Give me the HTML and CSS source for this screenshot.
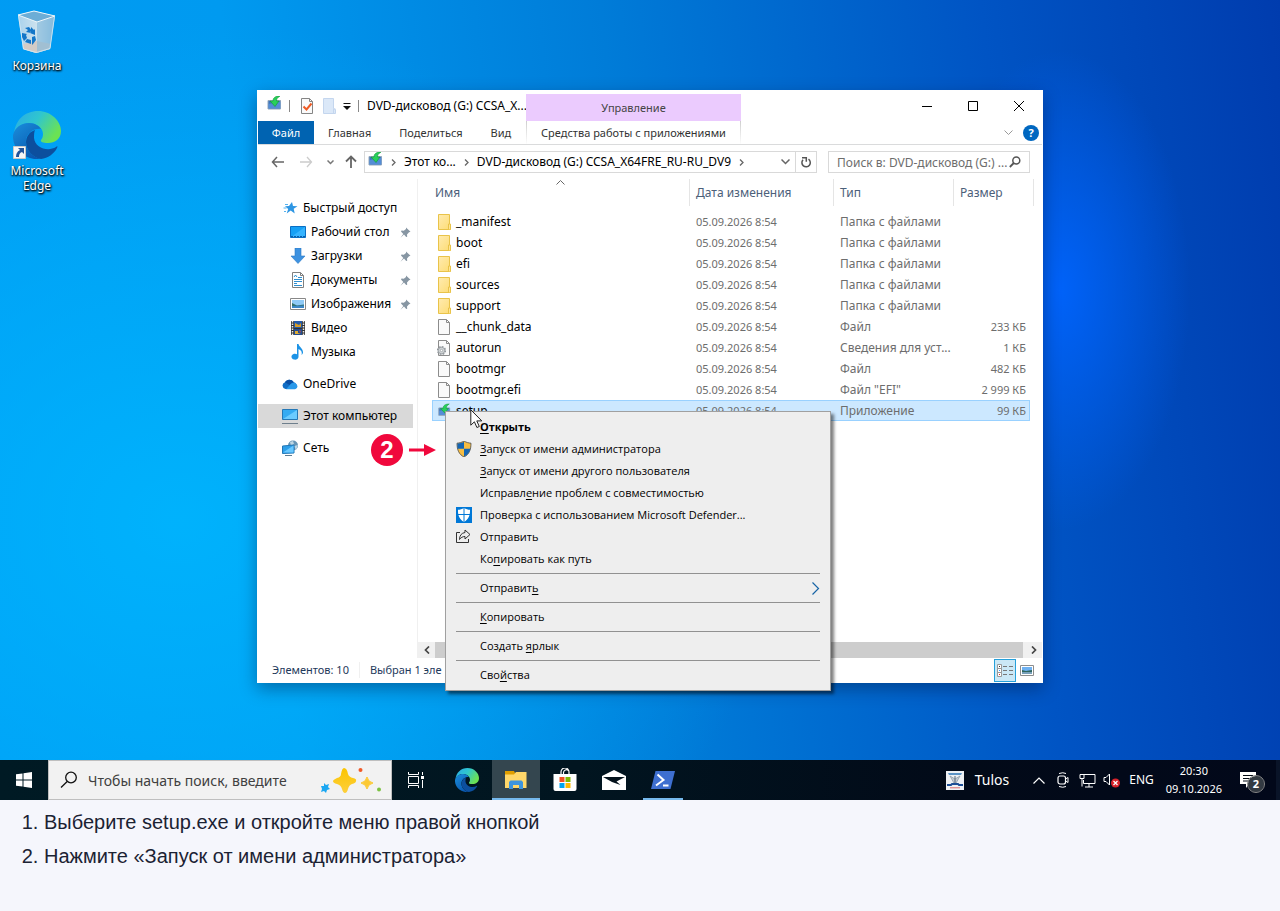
FILE: index.html
```html
<!DOCTYPE html>
<html lang="ru">
<head>
<meta charset="utf-8">
<meta name="viewport" content="width=device-width, initial-scale=1">
<title>Запуск от имени администратора</title>
<link rel="stylesheet" href="styles.css">
</head>
<body>
<svg class="defs" aria-hidden="true">
  <defs>
    <linearGradient id="edgeTop" x1="0" y1="0" x2="1" y2="0.5"><stop offset="0" stop-color="#2aa9e8"/><stop offset=".5" stop-color="#2fc6cf"/><stop offset="1" stop-color="#6be254"/></linearGradient>
    <linearGradient id="edgeMid" x1="0" y1="0" x2="0.6" y2="1"><stop offset="0" stop-color="#1a8fdc"/><stop offset="1" stop-color="#0a58b0"/></linearGradient>
    <linearGradient id="folderFill" x1="0" y1="0" x2="1" y2="1"><stop offset="0" stop-color="#ffebb0"/><stop offset="1" stop-color="#fddc74"/></linearGradient>
    <linearGradient id="binFill" x1="0" y1="0" x2="1" y2="0"><stop offset="0" stop-color="#a9d2ec"/><stop offset=".55" stop-color="#cfe3ee"/><stop offset="1" stop-color="#8cbfe0"/></linearGradient>
    <linearGradient id="starFill" x1="0" y1="0" x2="0" y2="1"><stop offset="0" stop-color="#fbc400"/><stop offset="1" stop-color="#fdcf3b"/></linearGradient>
    <symbol id="edge" viewBox="0 0 48 48">
      <path d="M1 23C2 9 12 0 25 0c13 0 23 10 23 20 0 8-6 12-13 12-5 0-8-1-7-3 1-1 2-3 2-6 0-6-6-11-14-11C8 12 2 17 1 23z" fill="url(#edgeTop)"/>
      <path d="M0 24C2 16 9 12 16 12c6 0 10 3 12 6-7-1-14 4-15 11-1 8 5 17 15 19C12 50-1 38 0 24z" fill="url(#edgeMid)"/>
      <path d="M22 19c-6 2-9 7-9 12 0 8 7 16 15 17 7-1 13-5 16-11 1-2 0-2-1-1-8 5-21 1-22-9 0-3 0-6 1-8z" fill="#0c4f9e"/>
    </symbol>
    <symbol id="folder" viewBox="0 0 14 16"><path d="M1.500.5h11v10l1 1v4h-12z" fill="url(#folderFill)" stroke="#e9c349"/><path d="M11.500 15V10h2v5.500" fill="#ffe596" stroke="#e9c349"/></symbol>
    <symbol id="file" viewBox="0 0 14 16"><path d="M1.500.5h8l3 3v12h-11z" fill="#fafafa" stroke="#8c8c8c"/><path d="M9.500.5v3h3" fill="none" stroke="#8c8c8c"/></symbol>
    <symbol id="setup" viewBox="0 0 16 16"><path d="M2 4.500h12.500v8.500H2z" fill="#3f76bd" stroke="#94a7bb"/><path d="M2.500 8l12-2.500v7h-12z" fill="#5c95df" opacity=".75"/><path d="M14 0C9 0 7 2 7 5H4l5 5.500L13 5h-2.500c0-2 1-3.500 3.500-5z" fill="#28d05a" stroke="#109738" stroke-width=".6"/></symbol>
    <symbol id="pin" viewBox="0 0 11 11"><path d="M6 .5l4.500 4.300-1.500.5-2 2.200.2 2.200-1 .3L4 7.500.5 10.700 3.300 7 1 4.600l.5-1 2.300.1L6 2z" fill="#8796a3"/></symbol>
  </defs>
</svg>

<main class="desktop">
  <div class="shortcuts">
    <a class="shortcut" href="#bin">
      <svg class="shortcut-icon bin" viewBox="0 0 40 44"><path d="M1 5L17 1l21 5-5 33-14 4-13-4z" fill="url(#binFill)"/><path d="M6 34l14-3 14 3-1 5-14 4-13-4z" fill="#d2cbc6"/><path d="M20 12v31l13-4 5-33z" fill="#80b8db" opacity=".6"/><path d="M1 5L17 1l21 5-18 6z" fill="#6cadd6" stroke="#eef7fb"/><path d="M1.500 6l5 33 13 3.500 13.500-4 4.500-32" fill="none" stroke="#d8ebf5" stroke-width=".8"/><path d="M8 18l4-1 3 4-2 1 1 1-5-1 2-2zM14 17l3 3 1-1v6l-5-2 1-1zM5 23l5 1-1 1 1 3-3 3-2-4zM10 29l4 1v4l-6-2zM15 27l3-1 1 4-3 4-1 1v-6z" fill="#1376c8"/></svg>
      <span>Корзина</span>
    </a>
    <a class="shortcut" href="#edge-app">
      <span class="edge-wrap"><svg class="shortcut-icon edge-large"><use href="#edge"/></svg>
      <svg class="link-badge" viewBox="0 0 13 13"><path d="M.5.5h12v12H.5z" fill="#f7f7f7" stroke="#c9c9c9"/><path d="M5 2h6v6L9 6C6.500 7 6 8.500 6 11H3C3 8 4 5.500 7 4z" fill="#24549a"/></svg></span>
      <span>Microsoft Edge</span>
    </a>
  </div>

  <section class="window" aria-label="Проводник">
    <header class="titlebar">
      <div class="quick-tools">
        <svg class="i16 lift"><use href="#setup"/></svg>
        <i class="rule"></i>
        <button aria-label="Свойства"><svg class="i16" viewBox="0 0 16 16"><path d="M2.500.5h8l3 3v12h-11z" fill="#fafafa" stroke="#858585"/><path d="M10.500.5v3h3" fill="none" stroke="#858585"/><path d="M4.500 8.500l3 3 5-6" fill="none" stroke="#ef5b24" stroke-width="2"/></svg></button>
        <button aria-label="Новая папка"><svg class="i16" viewBox="0 0 16 16"><path d="M2.500.5h10v10l2 1v4h-12z" fill="#dbe8f8" stroke="#c4d6ee"/><path d="M12.500 15v-4h2" fill="none" stroke="#c4d6ee"/></svg></button>
        <button aria-label="Настройка панели"><svg class="caret" viewBox="0 0 8 8"><path d="M.5 1.500h7" stroke="#111"/><path d="M0 4h8L4 8z" fill="#111"/></svg></button>
        <i class="rule"></i>
      </div>
      <h1>DVD-дисковод (G:) CCSA_X...</h1>
      <div class="manage">Управление</div>
      <div class="caption-buttons">
        <button aria-label="Свернуть"><svg viewBox="0 0 10 10"><path d="M0 5.500h10" stroke="#000"/></svg></button>
        <button aria-label="Развернуть"><svg viewBox="0 0 10 10"><path d="M.5.5h9v9h-9z" fill="none" stroke="#000"/></svg></button>
        <button aria-label="Закрыть"><svg viewBox="0 0 10 10"><path d="M0 0l10 10M10 0L0 10" stroke="#000"/></svg></button>
      </div>
    </header>
    <nav class="ribbon">
      <button class="file-tab">Файл</button>
      <button>Главная</button>
      <button>Поделиться</button>
      <button>Вид</button>
      <button class="tools-tab">Средства работы с приложениями</button>
      <span class="ribbon-end">
        <svg class="chev" viewBox="0 0 9 6"><path d="M.5.5l4 4 4-4" fill="none" stroke="#999"/></svg>
        <button class="help" aria-label="Справка">?</button>
      </span>
    </nav>
    <div class="address-row">
      <div class="history">
        <button aria-label="Назад"><svg class="arrow" viewBox="0 0 14 12"><path d="M13 6H1.500M6 1L1.500 6 6 11" fill="none" stroke="#666" stroke-width="1.500"/></svg></button>
        <button aria-label="Вперёд"><svg class="arrow" viewBox="0 0 14 12"><path d="M1 6h11M8 1l4.500 5L8 11" fill="none" stroke="#ccc" stroke-width="1.300"/></svg></button>
        <button aria-label="Журнал"><svg class="tiny" viewBox="0 0 7 5"><path d="M.5.5l3 3 3-3" fill="none" stroke="#777" stroke-width="1.500"/></svg></button>
        <button aria-label="Вверх"><svg class="arrow-up" viewBox="0 0 12 14"><path d="M6 13V1.500M1 6.500l5-5 5 5" fill="none" stroke="#666" stroke-width="1.800"/></svg></button>
      </div>
      <div class="address">
        <svg class="i16 lift"><use href="#setup"/></svg>
        <svg class="crumb" viewBox="0 0 5 7"><path d="M1 .5l3 3-3 3" fill="none" stroke="#666" stroke-width="1.300"/></svg>
        <a href="#pc">Этот ко...</a>
        <svg class="crumb" viewBox="0 0 5 7"><path d="M1 .5l3 3-3 3" fill="none" stroke="#666" stroke-width="1.300"/></svg>
        <a href="#dvd">DVD-дисковод (G:) CCSA_X64FRE_RU-RU_DV9</a>
        <svg class="crumb" viewBox="0 0 5 7"><path d="M1 .5l3 3-3 3" fill="none" stroke="#666" stroke-width="1.300"/></svg>
        <button class="drop" aria-label="Предыдущие расположения"><svg class="chev" viewBox="0 0 9 6"><path d="M.5.5l4 4 4-4" fill="none" stroke="#666" stroke-width="1.500"/></svg></button>
        <button class="reload" aria-label="Обновить"><svg viewBox="0 0 12 12"><path d="M8.500 3.200A4.200 4.200 0 1 1 3 3.800" fill="none" stroke="#555" stroke-width="1.500"/><path d="M2 1.700h4.300v4" fill="none" stroke="#555" stroke-width="1.500"/></svg></button>
      </div>
      <label class="find">
        <input type="text" aria-label="Поиск" placeholder="Поиск в: DVD-дисковод (G:) ...">
        <svg viewBox="0 0 12 12"><circle cx="7.300" cy="4.500" r="3.500" fill="none" stroke="#555" stroke-width="1.500"/><path d="M4.800 7L.8 11" stroke="#555" stroke-width="1.800"/></svg>
      </label>
    </div>

    <div class="content">
      <nav class="tree">
        <ul>
          <li><a href="#q"><svg class="i16" viewBox="0 0 16 16"><path d="M10 2l1 4 4.500.3-3.800 2.500 1 4.700-4-3-4 3 1.500-4.500L3 6.300l4-.3z" fill="#2e96e3"/><path d="M3 4.500h3M1.500 8h3M2 11.500h2" stroke="#55b2ef"/></svg>Быстрый доступ</a></li>
          <li class="child"><a href="#d"><svg class="i16" viewBox="0 0 16 16"><path d="M.5 2.500h15v11H.5z" fill="#16a0f5" stroke="#0a6fc4"/><path d="M1 13L15 3v10z" fill="#36b4ff"/><path d="M1 12.500h14" stroke="#0a5da8" stroke-dasharray="2 1"/></svg>Рабочий стол</a><svg class="pin"><use href="#pin"/></svg></li>
          <li class="child"><a href="#z"><svg class="i16" viewBox="0 0 16 16"><path d="M5 0h6v8h4l-7 7.500L1 8h4z" fill="#3e92e0" stroke="#2a79c6" stroke-width=".6"/></svg>Загрузки</a><svg class="pin"><use href="#pin"/></svg></li>
          <li class="child"><a href="#doc"><svg class="i16" viewBox="0 0 16 16"><path d="M2.500.5h8l3 3v12h-11z" fill="#fff" stroke="#808080"/><path d="M10.500.5v3h3" fill="none" stroke="#808080"/><path d="M4 5l1.500-2L7 5M8 5.500h4M4 7.500h8M4 11.500h3M4 13.500h8M4 9.500h8" stroke="#2f8fd0" fill="none"/></svg>Документы</a><svg class="pin"><use href="#pin"/></svg></li>
          <li class="child"><a href="#img"><svg class="i16" viewBox="0 0 16 16"><path d="M.5 2.500h15v11H.5z" fill="#fff" stroke="#888"/><path d="M2 4h12v8H2z" fill="#8fcaf6"/><path d="M2 7l5 2.500 7-1V12H2z" fill="#31706b"/><path d="M2 10l12-.5V12H2z" fill="#3a86c6"/></svg>Изображения</a><svg class="pin"><use href="#pin"/></svg></li>
          <li class="child"><a href="#vid"><svg class="i16" viewBox="0 0 16 16"><path d="M1 1h14v14H1z" fill="#333"/><path d="M2.500 1v14M13.500 1v14" stroke="#eee" stroke-width="1.500" stroke-dasharray="1.500 1"/><path d="M4 1h8v7H4z" fill="#255ba8"/><path d="M5 3l4 2 2-2v4H5z" fill="#d79c28"/><path d="M4 9h8v6H4z" fill="#234d91"/><path d="M5 11h3v2l3 1H5z" fill="#e0ab31"/><path d="M9 10l2 1-1 2z" fill="#c44d4b"/></svg>Видео</a></li>
          <li class="child"><a href="#mus"><svg class="i16" viewBox="0 0 16 16"><path d="M7 0h1.500c.5 3 5 4.500 4.500 9-.5 1-1 1.500-1.500 2 1-4-1-5-3-6v7.500A3.500 3 0 1 1 7 10.200z" fill="#1c93e6"/></svg>Музыка</a></li>
        </ul>
        <ul><li><a href="#od"><svg class="i16" viewBox="0 0 16 16"><path d="M3.500 13A3.500 3.500 0 0 1 3 6.200 5 5 0 0 1 11.500 6 4 4 0 0 1 13 13z" fill="#0f6cc4"/><path d="M3 6.200A5 5 0 0 1 11.500 6L7.500 9z" fill="#0a4fa5"/><path d="M4 13.200l5-5.500a4 4 0 0 1 6.500 2.500A3 3 0 0 1 13 13.200z" fill="#2999ea"/></svg>OneDrive</a></li></ul>
        <ul><li class="current"><a href="#pc"><svg class="i16" viewBox="0 0 16 16"><path d="M.5 1.500h15v10H.5z" fill="#35abf2" stroke="#2578b6"/><path d="M1 11L15 2v9z" fill="#6bcbff"/><path d="M0 15.500h16" stroke="#6e7f8c"/></svg>Этот компьютер</a></li></ul>
        <ul><li><a href="#net"><svg class="i16" viewBox="0 0 16 16"><circle cx="11" cy="5.500" r="5" fill="#6795b5"/><path d="M8 2l3-1 1 3-3 2zM12 6l4-1-2 5z" fill="#bfd6e3"/><path d="M.5 6l11.500-1v8l-11.500.5z" fill="#2d9fe9" stroke="#2277b6"/><path d="M1 12.500l10.500-7v7z" fill="#6ac8ff"/><path d="M3 15.500h7" stroke="#5d7b91"/></svg>Сеть</a></li></ul>
      </nav>

      <div class="listing">
        <table class="files">
          <colgroup><col class="c-name"><col class="c-date"><col class="c-type"><col class="c-size"></colgroup>
          <thead><tr><th>Имя<svg class="sort" viewBox="0 0 9 5"><path d="M.5 4.500l4-4 4 4" fill="none" stroke="#666"/></svg></th><th>Дата изменения</th><th>Тип</th><th>Размер</th></tr></thead>
          <tbody>
            <tr><td><svg><use href="#folder"/></svg>_manifest</td><td>05.09.2026 8:54</td><td>Папка с файлами</td><td></td></tr>
            <tr><td><svg><use href="#folder"/></svg>boot</td><td>05.09.2026 8:54</td><td>Папка с файлами</td><td></td></tr>
            <tr><td><svg><use href="#folder"/></svg>efi</td><td>05.09.2026 8:54</td><td>Папка с файлами</td><td></td></tr>
            <tr><td><svg><use href="#folder"/></svg>sources</td><td>05.09.2026 8:54</td><td>Папка с файлами</td><td></td></tr>
            <tr><td><svg><use href="#folder"/></svg>support</td><td>05.09.2026 8:54</td><td>Папка с файлами</td><td></td></tr>
            <tr><td><svg><use href="#file"/></svg>__chunk_data</td><td>05.09.2026 8:54</td><td>Файл</td><td>233 КБ</td></tr>
            <tr><td><svg viewBox="0 0 14 16"><path d="M1.500.5h8l3 3v12h-11z" fill="#fafafa" stroke="#8c8c8c"/><path d="M9.500.5v3h3" fill="none" stroke="#8c8c8c"/><circle cx="4.500" cy="10.500" r="3.600" fill="#ddd" stroke="#8d9398" stroke-width="2" stroke-dasharray="1.600 1.200"/><circle cx="4.500" cy="10.500" r="3.200" fill="#d5d8da" stroke="#8d9398" stroke-width=".7"/><circle cx="4.500" cy="10.500" r="1.200" fill="#fff" stroke="#8d9398" stroke-width=".7"/></svg>autorun</td><td>05.09.2026 8:54</td><td>Сведения для уст...</td><td>1 КБ</td></tr>
            <tr><td><svg><use href="#file"/></svg>bootmgr</td><td>05.09.2026 8:54</td><td>Файл</td><td>482 КБ</td></tr>
            <tr><td><svg><use href="#file"/></svg>bootmgr.efi</td><td>05.09.2026 8:54</td><td>Файл "EFI"</td><td>2 999 КБ</td></tr>
            <tr class="selected"><td><svg><use href="#setup"/></svg>setup</td><td>05.09.2026 8:54</td><td>Приложение</td><td>99 КБ</td></tr>
          </tbody>
        </table>
        <div class="scrollbar">
          <button aria-label="Влево"><svg viewBox="0 0 6 8"><path d="M5 .5L1.500 4 5 7.500" fill="none" stroke="#444" stroke-width="1.700"/></svg></button>
          <i class="thumb"></i>
          <button aria-label="Вправо"><svg viewBox="0 0 6 8"><path d="M1 .5L4.500 4 1 7.500" fill="none" stroke="#444" stroke-width="1.700"/></svg></button>
        </div>
      </div>
    </div>

    <footer class="status">
      <span>Элементов: 10</span><span>Выбран 1 эле</span>
      <div class="views">
        <button class="on" aria-label="Таблица"><svg viewBox="0 0 16 13"><path d="M.5.5h4v4h-4zM.5 4.500h4v4h-4zM.5 8.500h4v4h-4z" fill="#fff" stroke="#999"/><path d="M6 2.500h4m2 0h4M6 6.500h4m2 0h4M6 10.500h4m2 0h4" stroke="#777"/><path d="M2 2h1v1H2z" fill="#333"/><path d="M2 6h1v1H2z" fill="#39f"/><path d="M2 10h1v1H2z" fill="#e22"/></svg></button>
        <button aria-label="Крупные значки"><svg class="large-view" viewBox="0 0 14 11"><path d="M.5.5h13v10H.5z" fill="#fff" stroke="#8d8d8d"/><path d="M2 2h10v7H2z" fill="#6eb1f2"/><path d="M2 5l4 1 6-1v2H2z" fill="#2f665f"/><path d="M2 7h10v2H2z" fill="#78a0b9"/></svg></button>
      </div>
    </footer>
  </section>

  <menu class="context">
    <li><button class="main-action"><u>О</u>ткрыть</button></li>
    <li><button><svg class="i16" viewBox="0 0 16 16"><path d="M8 0c2.500 1.500 4.500 2 7 2.200C15 9 13 13.500 8 16 3 13.500 1 9 1 2.200 3.500 2 5.500 1.500 8 0z" fill="#f7bd42" stroke="#4a4a4a" stroke-width=".8"/><path d="M8 .8v7H1.600C1.300 6 1.300 4 1.400 2.600 4 2.400 6 1.800 8 .8z" fill="#1565b4"/><path d="M8 7.800h6.400C13.600 11.500 11.500 14 8 15.500z" fill="#1565b4"/></svg><span><u>З</u>апуск от имени администратора</span></button></li>
    <li><button><span><u>З</u>апуск от имени другого пользователя</span></button></li>
    <li><button><span>Исправл<u>е</u>ние проблем с совместимостью</span></button></li>
    <li><button><svg class="i16" viewBox="0 0 16 16"><path d="M0 0h16v16H0z" fill="#0078d7"/><path d="M8 1c2 1.300 4 1.700 6 1.800.2 6-1.500 9.500-6 12.200-4.500-2.700-6.200-6.200-6-12.200C4 2.700 6 2.300 8 1z" fill="#fff"/><path d="M8 1v14M2 7.500h12" stroke="#0078d7"/></svg><span>Проверка с использованием Microsoft Defender...</span></button></li>
    <li><button><svg class="i16 share" viewBox="0 0 16 16"><path d="M4 3.500H.5v10h12V10" fill="none" stroke="#333"/><path d="M9 3.500V1l5 4.500L9 10V7.500C6.500 7.500 5 8.500 3.500 10.500 3.500 6.500 5.500 4 9 3.500z" fill="none" stroke="#333"/></svg><span>Отправить</span></button></li>
    <li><button><span>Ко<u>п</u>ировать как путь</span></button></li>
    <li class="sep"></li>
    <li><button><span>Отправит<u>ь</u></span><svg class="submenu" viewBox="0 0 8 13"><path d="M.5.5l6 6-6 6" fill="none" stroke="#1764a5" stroke-width="1.200"/></svg></button></li>
    <li class="sep"></li>
    <li><button><span><u>К</u>опировать</span></button></li>
    <li class="sep"></li>
    <li><button><span>Создать <u>я</u>рлык</span></button></li>
    <li class="sep"></li>
    <li><button><span>Сво<u>й</u>ства</span></button></li>
  </menu>

  <svg class="cursor" viewBox="0 0 13 20"><path d="M.8.800v15.400l3.600-3.400 2.500 5.700 2.400-1-2.500-5.600h5z" fill="#fff" stroke="#222"/></svg>
  <div class="callout"><b>2</b><svg viewBox="0 0 28 12"><path d="M0 4.500h15V0l12 6-12 6V7.500H0z" fill="#f0083c"/></svg></div>
</main>

<footer class="taskbar">
  <button class="start" aria-label="Пуск"><svg viewBox="0 0 16 16"><path d="M0 2.300l6.500-.9v6.100H0zM7.500 1.200L16 0v7.500H7.500zM0 8.500h6.500v6.100L0 13.700zM7.500 8.500H16V16l-8.500-1.200z" fill="#fff"/></svg></button>
  <label class="task-search">
    <svg class="lens" viewBox="0 0 18 18"><circle cx="11" cy="6.500" r="5.300" fill="none" stroke="#111" stroke-width="1.300"/><path d="M7.200 10.500L1 16.500" stroke="#111" stroke-width="1.300"/></svg>
    <input type="text" aria-label="Поиск Windows" placeholder="Чтобы начать поиск, введите">
    <svg class="sparkles" viewBox="0 0 62 26"><path d="M24 1q3 0 4 6 1 3 5 4 4 1 3 3 0 2-4 3-3 1-4 5-1 4-3 4t-3-4q-1-4-5-5-4-1-4-3 0-1 4-3 4-1 4-4 1-6 3-6z" fill="url(#starFill)"/><path d="M47 10q1 5 6 6-5 1-6 6-1-5-6-6 5-1 6-6z" fill="#fcc934" stroke="#fcc934"/><path d="M4 16l2 2 3-1-1 3 2 2-3 1-1 3-2-2-3 1 1-3-1-3 3 0z" fill="#1ba7f2"/><circle cx="40.500" cy="3" r="2" fill="#f05a28"/><circle cx="59" cy="22.500" r="2" fill="#7cc242"/></svg>
  </label>
  <div class="apps">
    <button aria-label="Представление задач"><svg class="taskview" viewBox="0 0 16 16"><path d="M.5 0v2.500h10V0M.5 16v-2.500h10V16M.5 4.500h10v7H.5zM14.500 0v3m0 5v8" fill="none" stroke="#fff"/><path d="M13 4h3v3h-3z" fill="#fff"/></svg></button>
    <button aria-label="Edge"><svg class="i24"><use href="#edge"/></svg></button>
    <button class="active" aria-label="Проводник"><svg class="explorer" viewBox="0 0 22 18"><path d="M0 0h9l1 2v3H0z" fill="#e09e00"/><path d="M0 3.500h9L11 1h10.500v16H0z" fill="#ffd76a"/><path d="M4 18v-7l1.500-1.500h11L18 11v7h-4v-4H8v4z" fill="#3d94dd"/></svg></button>
    <button aria-label="Магазин"><svg class="store" viewBox="0 0 24 24"><path d="M8 6V4a4 4 0 0 1 8 0v2M10.500 6V4.500a3 3 0 0 1 5-2" fill="none" stroke="#fff" stroke-width="1.200"/><path d="M.5 6h23v15q0 2-2 2h-19q-2 0-2-2z" fill="#fff"/><path d="M6.500 9h5v5h-5z" fill="#f25022"/><path d="M12.500 9h5v5h-5z" fill="#7fba00"/><path d="M6.500 15h5v5h-5z" fill="#00a4ef"/><path d="M12.500 15h5v5h-5z" fill="#ffb900"/></svg></button>
    <button aria-label="Почта"><svg class="mail" viewBox="0 0 24 20"><path d="M0 6L12 0l12 6v14H0z" fill="#fff"/><path d="M1 7h22L14.500 11.500l4 3.500L10 12z" fill="#04121c"/></svg></button>
    <button class="running" aria-label="PowerShell"><svg class="shell" viewBox="0 0 24 18"><path d="M4.500 0H24l-4.500 18H0z" fill="#3e6fd0"/><path d="M6.500 3.500l6 5.500-7.500 5.500M12 14.500h5.500" fill="none" stroke="#fff" stroke-width="2"/></svg></button>
  </div>
  <div class="tray">
    <button class="tulos"><svg viewBox="0 0 18 19"><path d="M0 0h18v19H0z" fill="#eef1f4"/><path d="M2 2h14l-1 2H3z" fill="#5b93c5"/><path d="M4 5l5 9 5-9-5 3z" fill="#c4cbd2" stroke="#8996a2" stroke-width=".7"/><path d="M9 5v8" stroke="#567"/><path d="M1 14h4l1-1h6l1 1h4" stroke="#1c4e96" stroke-width="1.800" fill="none"/><path d="M4 16.800h10" stroke="#dc6b6b"/></svg>Tulos</button>
    <button aria-label="Скрытые значки"><svg class="up" viewBox="0 0 12 7"><path d="M.5 6.500L6 1l5.500 5.500" fill="none" stroke="#fff" stroke-width="1.200"/></svg></button>
    <button aria-label="Камера"><svg class="cam" viewBox="0 0 12 16"><path d="M2 1.500q4-1.500 7 0M2 14.500q4 1.500 7 0" fill="none" stroke="#fff"/><rect x="1" y="4" width="7.500" height="8" rx="2" fill="none" stroke="#fff" stroke-width="1.200"/><path d="M8.500 7l2.500-1.500v5L8.500 9" fill="none" stroke="#fff"/></svg></button>
    <button aria-label="Сеть"><svg class="net" viewBox="0 0 17 15"><path d="M5 1.500h11v9H4.500V7M10 10.500v3.500M6 14h8M1 1.500h4v4H1zM3 5.500v8" fill="none" stroke="#fff"/></svg></button>
    <button aria-label="Громкость"><svg class="vol" viewBox="0 0 17 15"><path d="M1 4.500h2L6.500 1v11L3 8.500H1z" fill="none" stroke="#fff"/><circle cx="12.500" cy="10" r="4.500" fill="#d8222a"/><path d="M10.500 8l4 4m0-4l-4 4" stroke="#fff" stroke-width="1.200"/></svg></button>
    <button class="lang">ENG</button>
    <button class="clock"><span>20:30</span><span>09.10.2026</span></button>
    <button class="notify" aria-label="Уведомления: 2"><svg viewBox="0 0 16 16"><path d="M0 0h16v12H9l-3 4v-4H0z" fill="#fff"/><path d="M3 3.500h10M3 6.500h10M3 9h7" stroke="#020a14"/></svg><b>2</b></button>
  </div>
</footer>

<section class="steps">
  <ol>
    <li>Выберите setup.exe и откройте меню правой кнопкой</li>
    <li>Нажмите «Запуск от имени администратора»</li>
  </ol>
</section>
</body>
</html>
```
FILE: styles.css
```css
*, *::before, *::after { box-sizing: border-box; }
body {
  margin: 0;
  min-height: 100vh;
  display: grid;
  grid-template-rows: 1fr auto auto;
  font: 12px/16px "Noto Sans", "Open Sans", sans-serif;
  color: #000;
  background: #f5f6fc;
}
button { border: 0; padding: 0; background: none; font: inherit; color: inherit; }
input { border: 0; padding: 0; background: none; font: inherit; min-width: 0; outline: 0; }
a { color: inherit; text-decoration: none; }
svg { display: block; flex: none; }
ul, menu { list-style: none; margin: 0; padding: 0; }
.defs { position: absolute; width: 0; height: 0; }
.i16 { width: 16px; height: 16px; }
.i24 { width: 24px; height: 24px; }
.lift { margin-bottom: 4px; }
.chev { width: 9px; height: 6px; }

/* Desktop */
.desktop {
  position: relative;
  min-height: 760px;
  overflow: hidden;
  background:
    radial-gradient(ellipse 130px 240px at 1060px 290px, rgba(0, 100, 255, .9), rgba(0, 100, 255, 0)),
    radial-gradient(ellipse 600px 500px at 180px 520px, rgba(0, 184, 255, .8), rgba(0, 184, 255, 0)),
    linear-gradient(84deg, #009cf4 0%, #009af0 22%, #007cd8 50%, #0054c4 78%, #003cae 100%);
}
.shortcuts { padding: 10px 0 0; width: 74px; display: grid; gap: 38px; }
.shortcut {
  display: grid;
  justify-items: center;
  gap: 4px;
  line-height: 15px;
  text-align: center;
  color: #fff;
  text-shadow: 0 1px 2px #000, 1px 1px 2px #000;
}
.bin { width: 40px; height: 44px; }
.edge-wrap { position: relative; }
.edge-large { width: 48px; height: 48px; }
.link-badge { position: absolute; left: 0; bottom: 0; width: 13px; height: 13px; }

/* Explorer window */
.window {
  position: absolute;
  left: 257px;
  top: 90px;
  width: 786px;
  height: 593px;
  display: flex;
  flex-direction: column;
  border: 1px solid #fff;
  background: #fff;
  box-shadow: 0 6px 16px rgba(0, 20, 60, .4);
}
.titlebar { display: flex; height: 30px; }
.quick-tools { display: flex; align-items: center; width: 109px; padding-left: 8px; }
.quick-tools .rule { width: 1px; height: 12px; background: #888; margin-left: 7px; }
.quick-tools button { margin-left: 9px; }
.quick-tools button + button { margin-left: 6px; }
.quick-tools .caret { width: 8px; height: 8px; }
.titlebar h1 { margin: 0; width: 159px; font: inherit; line-height: 30px; white-space: nowrap; }
.manage { width: 215px; margin-top: 3px; font-size: 11px; line-height: 27px; text-align: center; background: #ebcbfe; color: #444; }
.caption-buttons { margin-left: auto; display: flex; }
.caption-buttons button { width: 46px; display: grid; place-items: center; }
.caption-buttons svg { width: 10px; height: 10px; }
.ribbon { display: flex; height: 24px; border-bottom: 1px solid #dadbdc; color: #333; font-size: 11px; }
.ribbon > button { padding: 0 14px; }
.ribbon > .file-tab { width: 56px; padding: 0; background: #0063b1; color: #fff; }
.ribbon > .tools-tab {
  width: 215px;
  padding: 0;
  margin-left: auto;
  border: solid #ccc;
  border-width: 0 1px;
  border-image: linear-gradient(#ccc, #fff) 1;
}
.ribbon-end { width: 301px; display: flex; align-items: center; justify-content: flex-end; gap: 10px; padding-right: 3px; }
.help { width: 16px; height: 16px; border-radius: 8px; background: #0067c0; color: #fff; font-weight: 700; line-height: 16px; }
.address-row { display: flex; align-items: center; padding: 6px 12px 6px 0; }
.history { display: flex; align-items: center; width: 106px; padding-left: 13px; gap: 14px; }
.history button:last-child { margin-left: -3px; }
.arrow { width: 14px; height: 12px; }
.tiny { width: 7px; height: 5px; }
.arrow-up { width: 12px; height: 14px; }
.address { flex: 1; display: flex; align-items: center; height: 22px; border: 1px solid #d9d9d9; padding-left: 2px; }
.address a { white-space: nowrap; }
.crumb { width: 5px; height: 7px; margin: 0 8px; }
.drop { margin-left: auto; width: 19px; display: grid; place-items: center; }
.reload { width: 21px; align-self: stretch; display: grid; place-items: center; border-left: 1px solid #d9d9d9; }
.reload svg { width: 12px; height: 12px; }
.find { width: 202px; height: 22px; margin-left: 11px; display: flex; align-items: center; border: 1px solid #d9d9d9; padding: 0 8px; }
.find input { flex: 1; height: 20px; }
.find input::placeholder { color: #6d6d6d; opacity: 1; }
.find svg { width: 12px; height: 12px; }

.content { flex: 1; display: flex; min-height: 0; }
.tree { width: 160px; padding: 17px 4px 0 0; border-right: 1px solid #f0f0f0; }
.tree ul + ul { margin-top: 8px; }
.tree li { display: flex; align-items: center; height: 24px; padding-left: 24px; }
.tree li.child { padding-left: 32px; }
.tree a { display: flex; align-items: center; gap: 5px; flex: 1; white-space: nowrap; }
.tree .current { background: #d9d9d9; }
.pin { width: 11px; height: 11px; margin-right: 2px; }
.listing { flex: 1; display: flex; flex-direction: column; min-width: 0; }
.files { width: 598px; margin-left: 14px; border-collapse: collapse; table-layout: fixed; }
.c-name { width: 258px; }
.c-date { width: 144px; }
.c-type { width: 120px; }
.c-size { width: 76px; }
.files th { position: relative; height: 27px; padding: 0 0 0 6px; text-align: left; font-weight: 400; color: #4c607a; }
.files th::after { content: ""; position: absolute; right: 0; top: 0; bottom: 0; width: 1px; background: #e5e5e5; }
.files th:last-child::after { right: -4px; }
.files th:first-child { padding-left: 3px; }
.sort { position: absolute; left: 48%; top: 1px; width: 9px; height: 5px; }
.files thead::after { content: ""; display: block; height: 5px; }
.files td { height: 21px; padding: 0 0 0 6px; color: #6d6d6d; white-space: nowrap; }
.files td:first-child { padding-left: 5px; color: #000; }
.files td:nth-child(2), .files td:last-child { font-size: 11px; }
.files td:last-child { text-align: right; padding-right: 4px; }
.files td svg { display: inline-block; width: 14px; height: 16px; margin-right: 5px; vertical-align: top; }
.files .selected { background: #cce8ff; outline: 1px solid #99d1ff; outline-offset: -1px; }
.scrollbar { margin-top: auto; display: flex; height: 16px; background: #f0f0f0; }
.scrollbar button { width: 17px; display: grid; place-items: center; }
.scrollbar svg { width: 6px; height: 8px; }
.thumb { flex: 1; background: #cdcdcd; margin-right: 2px; }
.status { display: flex; align-items: center; height: 24px; padding-left: 14px; color: #1e395b; font-size: 11px; }
.status span + span { margin-left: 10px; padding-left: 10px; border-left: 1px solid #f0f0f0; }
.views { margin-left: auto; display: flex; padding-right: 4px; }
.views button { width: 22px; height: 23px; display: grid; place-items: center; }
.views .on { background: #cbe8f6; border: 1px solid #26a0da; }
.views svg { width: 16px; height: 13px; }
.views .large-view { width: 14px; height: 11px; }

/* Context menu */
.context {
  position: absolute;
  left: 445px;
  top: 411px;
  width: 386px;
  padding: 4px 0;
  background: #eee;
  border: 1px solid #a0a0a0;
  box-shadow: 3px 3px 3px rgba(0, 0, 0, .5);
  font-family: "Open Sans", "Noto Sans", sans-serif;
  font-size: 11px;
}
.context button { position: relative; width: 100%; height: 22px; display: flex; align-items: center; padding: 0 10px 0 34px; text-align: left; }
.context .i16 { margin-left: -24px; margin-right: 8px; }
.context u { text-underline-offset: 2px; }
.context .main-action { font-weight: 700; display: block; }
.context .sep { height: 1px; margin: 3px 10px; background: #919191; }
.submenu { width: 8px; height: 13px; margin-left: auto; }
.cursor { position: absolute; left: 470px; top: 409px; width: 13px; height: 20px; }
.callout { position: absolute; left: 371px; top: 434px; display: flex; align-items: center; gap: 6px; }
.callout b {
  width: 32px;
  height: 32px;
  border-radius: 16px;
  background: #f0083c;
  color: #fff;
  font: 700 24px/32px "Liberation Sans", sans-serif;
  text-align: center;
}
.callout svg { width: 28px; height: 12px; }

/* Taskbar */
.taskbar { display: flex; height: 40px; color: #fff; background: linear-gradient(90deg, #001a24, #011520 45%, #020a18 75%, #02081a); }
.start { width: 48px; display: grid; place-items: center; }
.start svg { width: 16px; height: 16px; }
.task-search { width: 344px; display: flex; align-items: center; padding: 0 9px 0 11px; background: #f2f2f2; border: 1px solid #bfbfbf; }
.lens { width: 18px; height: 18px; }
.task-search input { flex: 1; margin-left: 10px; font-size: 14px; height: 30px; }
.task-search input::placeholder { color: #404040; opacity: 1; }
.sparkles { width: 62px; height: 26px; }
.apps { display: flex; gap: 1px; }
.apps button { width: 48px; display: grid; place-items: center; }
.apps button:first-child { margin-right: 2px; }
.apps .active { background: #34464f; border-bottom: 2px solid #76b9ed; border-top: 2px solid #34464f; }
.apps .running { border-top: 2px solid transparent; background: linear-gradient(#76b9ed, #76b9ed) center bottom / 40px 2px no-repeat; padding-bottom: 2px; }
.taskview { width: 16px; height: 16px; }
.explorer { width: 22px; height: 18px; }
.store { width: 24px; height: 24px; }
.mail { width: 24px; height: 20px; }
.shell { width: 24px; height: 18px; }
.tray { margin-left: auto; display: flex; align-items: center; padding-right: 12px; border-right: 4px solid #0a1428; }
.tulos { display: flex; align-items: center; gap: 11px; font-size: 14px; margin-right: 24px; }
.tulos svg { width: 18px; height: 19px; }
.up { width: 12px; height: 7px; margin-right: 12px; }
.cam { width: 12px; height: 16px; margin-right: 10px; }
.net { width: 17px; height: 15px; margin-right: 7px; }
.vol { width: 17px; height: 15px; margin-right: 9px; }
.lang { margin-right: 12px; }
.clock { display: grid; font-size: 11px; line-height: 18px; margin-right: 18px; }
.notify { position: relative; width: 24px; height: 24px; }
.notify svg { width: 16px; height: 16px; }
.notify b { position: absolute; right: 0; bottom: 0; width: 16px; height: 16px; border-radius: 8px; background: #333a42; outline: 1px solid #888; line-height: 16px; font-size: 11px; }

/* Instructions */
.steps { padding: 5px 0 38px; color: #1b2233; font: 20px/34px "Liberation Sans", sans-serif; }
.steps ol { margin: 0; padding-left: 44px; }
```
